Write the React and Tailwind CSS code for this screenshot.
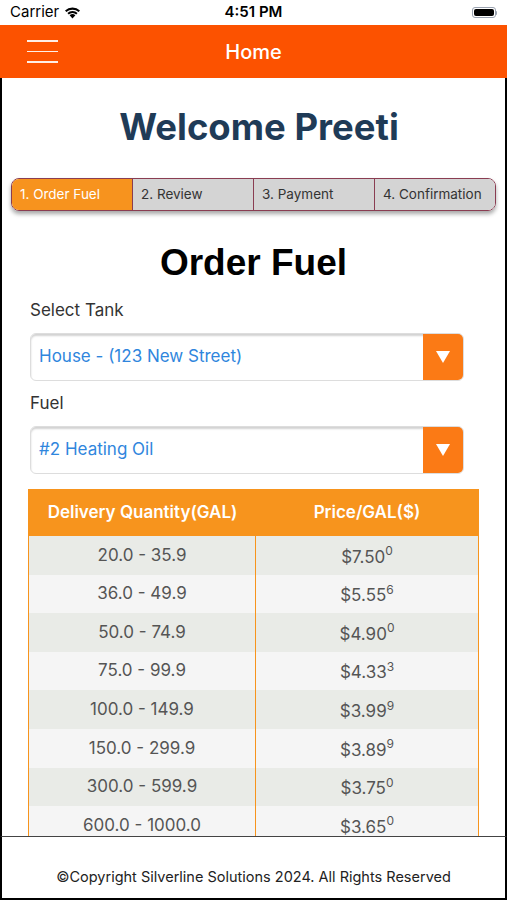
import React from 'react';

const steps = ['1. Order Fuel', '2. Review', '3. Payment', '4. Confirmation'];

const prices = [
  { range: '20.0 - 35.9', price: '$7.50', sup: '0' },
  { range: '36.0 - 49.9', price: '$5.55', sup: '6' },
  { range: '50.0 - 74.9', price: '$4.90', sup: '0' },
  { range: '75.0 - 99.9', price: '$4.33', sup: '3' },
  { range: '100.0 - 149.9', price: '$3.99', sup: '9' },
  { range: '150.0 - 299.9', price: '$3.89', sup: '9' },
  { range: '300.0 - 599.9', price: '$3.75', sup: '0' },
  { range: '600.0 - 1000.0', price: '$3.65', sup: '0' },
];

const StatusBar = () => (
  <div className="h-[25px] flex items-center justify-between px-[10px] bg-white text-black text-[15px] relative">
    <div className="flex items-center gap-[5px]">
      <span>Carrier</span>
      <svg width="17" height="13" viewBox="0 0 17 13">
        <path d="M8.5 12.5 L5.6 9.3 A4.2 4.2 0 0 1 11.4 9.3 Z" fill="#000" />
        <path d="M3.4 7.1 A7.3 7.3 0 0 1 13.6 7.1 L12.2 8.6 A5.3 5.3 0 0 0 4.8 8.6 Z" fill="#000" />
        <path d="M1 4.6 A10.8 10.8 0 0 1 16 4.6 L14.6 6.1 A8.8 8.8 0 0 0 2.4 6.1 Z" fill="#000" />
      </svg>
    </div>
    <span className="absolute left-1/2 -translate-x-1/2 font-semibold">4:51 PM</span>
    <div className="flex items-center">
      <div className="w-[24px] h-[11px] rounded-[3px] border border-gray-400 p-[1px]">
        <div className="w-full h-full bg-black rounded-[2px]" />
      </div>
      <div className="w-[1.5px] h-[4px] bg-gray-400 rounded-r" />
    </div>
  </div>
);

const Header = () => (
  <div className="h-[53px] bg-[#fc5200] flex items-center relative">
    <div className="ml-[27px] flex flex-col gap-[9px]">
      <div className="w-[31px] h-[1.5px] bg-white/90" />
      <div className="w-[31px] h-[1.5px] bg-white/90" />
      <div className="w-[31px] h-[1.5px] bg-white/90" />
    </div>
    <span className="absolute left-1/2 -translate-x-1/2 text-white text-[20px] font-medium">Home</span>
  </div>
);

const Stepper = () => (
  <div className="mx-[9px] h-[33px] flex rounded-[8px] border-[1.5px] border-[#8a3d52] overflow-hidden shadow-[0_3px_4px_rgba(0,0,0,0.35)]">
    {steps.map((step, i) => (
      <div
        key={step}
        className={
          i === 0
            ? 'flex-1 flex items-center pl-[8px] bg-[#f7931e] text-white text-[13.5px]'
            : 'flex-1 flex items-center pl-[8px] bg-[#d4d4d4] text-[#333] text-[13.5px] border-l border-[#8a3d52]'
        }
      >
        {step}
      </div>
    ))}
  </div>
);

const SelectBox = ({ value }) => (
  <div className="ml-[28px] mr-[41px] h-[48px] flex rounded-[6px] border border-[#ddd] overflow-hidden shadow-[inset_0_2px_2px_rgba(0,0,0,0.18)]">
    <div className="flex-1 flex items-center pl-[8px] text-[#2f86dd] text-[17px]">{value}</div>
    <div className="w-[40px] bg-[#fb7a15] flex items-center justify-center">
      <svg width="16" height="14" viewBox="0 0 16 14">
        <path d="M1 1 H15 L8 13 Z" fill="#fff" />
      </svg>
    </div>
  </div>
);

export default function App() {
  return (
    <div className="w-[507px] h-[900px] flex flex-col bg-white font-['Inter',sans-serif] overflow-hidden">
      <StatusBar />
      <Header />
      <main className="flex-1 flex flex-col border-x-2 border-black overflow-hidden">
        <h1 className="mt-[29px] pl-[11px] text-center text-[36.5px] leading-[41px] font-bold text-[#1f3b57]">
          Welcome Preeti
        </h1>
        <div className="mt-[30px]">
          <Stepper />
        </div>
        <h2 className="mt-[31px] text-center text-[37px] leading-[41px] font-bold text-black font-['Liberation_Sans',Arial,sans-serif]">
          Order Fuel
        </h2>
        <label className="mt-[16px] ml-[28px] text-[17px] leading-[22px] text-[#333]">Select Tank</label>
        <div className="mt-[12px]">
          <SelectBox value="House - (123 New Street)" />
        </div>
        <label className="mt-[11px] ml-[28px] text-[17px] leading-[22px] text-[#333]">Fuel</label>
        <div className="mt-[12px]">
          <SelectBox value="#2 Heating Oil" />
        </div>
        <div className="mt-[15px] mx-[26px] border-x border-[#f7941d]">
          <div className="h-[47px] flex bg-[#f7941d] text-white text-[17px] font-semibold">
            <div className="w-[227px] flex items-center justify-center">Delivery Quantity(GAL)</div>
            <div className="flex-1 flex items-center justify-center">Price/GAL($)</div>
          </div>
          {prices.map((row, i) => (
            <div
              key={row.range}
              className={
                i % 2 === 0
                  ? 'h-[38.6px] flex bg-[#e9ebe7] text-[#555] text-[17px]'
                  : 'h-[38.6px] flex bg-[#f5f5f5] text-[#555] text-[17px]'
              }
            >
              <div className="w-[227px] flex items-center justify-center border-r-[1.5px] border-[#f7941d]">{row.range}</div>
              <div className="flex-1 flex items-center justify-center">
                <span className="mt-[4px]">{row.price}</span>
                <sup className="text-[12px] -mt-[8px] relative top-0">{row.sup}</sup>
              </div>
            </div>
          ))}
        </div>
      </main>
      <footer className="h-[64px] shrink-0 flex justify-center pt-[30px] border-t-[1.5px] border-t-[#444] border-b-2 border-b-black border-x-2 border-x-black bg-white text-[14.5px] leading-[20px] text-[#222]">
        ©Copyright Silverline Solutions 2024. All Rights Reserved
      </footer>
    </div>
  );
}
